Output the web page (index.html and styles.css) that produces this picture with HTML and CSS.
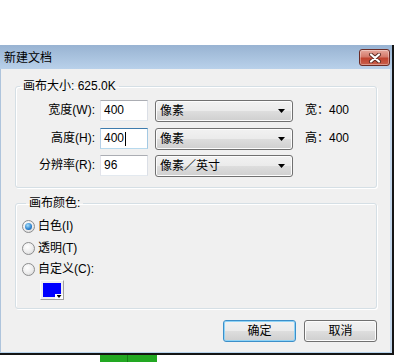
FILE: index.html
```html
<!DOCTYPE html>
<html lang="zh-CN">
<head>
  <meta charset="UTF-8" />
  <title>新建文档</title>
  <link rel="stylesheet" href="styles.css">
</head>
<body>
  <div class="window">
    <div class="frame">
      <div class="titlebar">
        <span class="title">新建文档</span>
        <button class="close" title="关闭">
          <svg width="14" height="10" viewBox="0 0 14 10">
            <path d="M3 1.5 L11 8.5 M11 1.5 L3 8.5" stroke="#5b2a22" stroke-width="4" stroke-linecap="round" fill="none"/>
            <path d="M3 1.5 L11 8.5 M11 1.5 L3 8.5" stroke="#fff" stroke-width="2.2" stroke-linecap="round" fill="none"/>
          </svg>
        </button>
      </div>
      <div class="dialog">
        <fieldset class="group size">
          <legend>画布大小: 625.0K</legend>
          <div class="row">
            <label>宽度(W):</label>
            <div class="field">400</div>
            <div class="combo"><span>像素</span><i class="arrow"></i></div>
            <span class="info">宽：400</span>
          </div>
          <div class="row">
            <label>高度(H):</label>
            <div class="field focused">400<span class="caret"></span></div>
            <div class="combo"><span>像素</span><i class="arrow"></i></div>
            <span class="info">高：400</span>
          </div>
          <div class="row last">
            <label>分辨率(R):</label>
            <div class="field">96</div>
            <div class="combo"><span>像素／英寸</span><i class="arrow"></i></div>
          </div>
        </fieldset>

        <fieldset class="group colour">
          <legend>画布颜色:</legend>
          <div class="option"><span class="radio on"></span><span>白色(I)</span></div>
          <div class="option"><span class="radio"></span><span>透明(T)</span></div>
          <div class="option"><span class="radio"></span><span>自定义(C):</span></div>
          <div class="swatch"><b></b><span class="drop"></span></div>
        </fieldset>

        <div class="buttons">
          <button class="btn default">确定</button>
          <button class="btn">取消</button>
        </div>
      </div>
    </div>
  </div>
  <div class="strip"><span></span><span></span></div>
</body>
</html>
```

FILE: styles.css
```css
* {
  box-sizing: border-box;
}
body {
  margin: 0;
  padding-top: 45px;
  background: #fff;
  font-family: "Liberation Sans", "Noto Sans CJK SC", sans-serif;
  font-size: 12px;
  color: #000;
}
button {
  font: inherit;
  color: inherit;
}

/* 窗口外框 */
.window {
  width: 394px;
  border-right: 2px solid #151515;
  border-bottom: 2px solid #151515;
}
.frame {
  border-left: 1px solid #aec4dc;
  border-right: 2px solid #c3d6ea;
  border-bottom: 1px solid #b7d4ee;
}
.titlebar {
  height: 24px;
  display: flex;
  align-items: center;
  padding-left: 4px;
  background: linear-gradient(#98b3d2, #b9d1ea);
  margin-left: -1px;
  margin-right: -2px;
  padding-right: 2px;
}
.title {
  line-height: 16px;
  margin-top: 1px;
}
.close {
  margin-left: auto;
  align-self: flex-start;
  margin-top: 4px;
  width: 31px;
  height: 17px;
  padding: 0;
  display: flex;
  align-items: center;
  justify-content: center;
  border: 1px solid #6b2b25;
  border-radius: 3px;
  background: linear-gradient(#e7a89c, #d47a6b 45%, #c0432f 55%, #c9604c);
  box-shadow: inset 0 0 0 1px rgba(255,255,255,0.35);
}

/* 对话框主体 */
.dialog {
  height: 283px;
  background: #f0f0f0;
  padding: 0 13px 0 14px;
  display: flex;
  flex-direction: column;
}
.group {
  margin: 0;
  padding: 7px 0 10px 0;
  min-width: 0;
  border: 1px solid #d5dfe5;
  border-radius: 3px;
  box-shadow: 1px 1px 0 #fff, inset 1px 1px 0 #fff;
}
.group legend {
  margin-left: 4px;
  padding: 0 3px;
  line-height: 14px;
}
.size {
  margin-top: 10px;
}
.colour {
  margin-top: 8px;
  padding: 6px 0 8px 6px;
}

.row {
  display: flex;
  align-items: flex-start;
  height: 22px;
  margin-bottom: 6px;
}
.row.last {
  margin-bottom: 0;
}
.row + .row.last {
  margin-top: -1px;
}
.row label {
  width: 79px;
  text-align: right;
  line-height: 21px;
}
.field {
  margin-left: 5px;
  width: 48px;
  height: 21px;
  padding: 0 3px;
  line-height: 19px;
  background: #fff;
  border: 1px solid;
  border-color: #abadb3 #dbdfe6 #e3e9ef #e2e3ea;
  display: flex;
  align-items: center;
}
.field.focused {
  border-color: #3d7bad #a4c9e3 #b7d9ed #b5cfe7;
}
.caret {
  display: inline-block;
  width: 1px;
  height: 14px;
  background: #000;
  margin-left: 1px;
}
.combo {
  margin-left: 7px;
  width: 138px;
  height: 22px;
  display: flex;
  align-items: center;
  padding: 0 7px 0 4px;
  border: 1px solid #707070;
  border-radius: 3px;
  background: linear-gradient(#f2f2f2, #ebebeb 48%, #dddddd 52%, #cfcfcf);
  box-shadow: inset 0 0 0 1px #fcfcfc;
}
.combo span {
  flex: 1;
  line-height: 16px;
}
.arrow {
  width: 7px;
  height: 4px;
  background: #000;
  clip-path: polygon(0 0, 100% 0, 50% 100%);
}
.info {
  margin-left: 12px;
  line-height: 21px;
}

/* 单选项 */
.option {
  display: flex;
  align-items: center;
  height: 20px;
  margin-bottom: 1px;
}
.option:first-of-type {
  margin-bottom: 2px;
}
.option span:last-child {
  margin-left: 3px;
  line-height: 16px;
}
.radio {
  width: 13px;
  height: 13px;
  border-radius: 50%;
  border: 1px solid #8c8d8e;
  background: radial-gradient(circle at 40% 35%, #ffffff, #ececec 55%, #cfcfcf);
  display: flex;
  align-items: center;
  justify-content: center;
}
.radio.on::after {
  content: "";
  width: 7px;
  height: 7px;
  border-radius: 50%;
  background: radial-gradient(circle at 40% 35%, #a7e0fb, #2a7fcc 60%, #0f4f93);
}
.swatch {
  position: relative;
  margin-left: 18px;
  width: 24px;
  height: 20px;
  padding: 2px;
  border: 1px solid;
  border-color: #fdfdfd #a0a0a0 #a0a0a0 #fdfdfd;
  background: #f0f0f0;
}
.swatch b {
  display: block;
  height: 100%;
  background: #0000ff;
}
.swatch .drop {
  position: absolute;
  right: 0;
  bottom: 0;
  width: 8px;
  height: 5px;
  background: #fff;
  display: flex;
  justify-content: center;
  padding-top: 1px;
}
.swatch .drop::after {
  content: "";
  width: 5px;
  height: 3px;
  background: #000;
  clip-path: polygon(0 0, 100% 0, 50% 100%);
}

/* 按钮 */
.buttons {
  display: flex;
  justify-content: flex-end;
  gap: 8px;
  margin-top: 11px;
}
.btn {
  width: 73px;
  height: 22px;
  padding: 0;
  line-height: 18px;
  border: 1px solid #707070;
  border-radius: 3px;
  background: linear-gradient(#f2f2f2, #ebebeb 48%, #dddddd 52%, #cfcfcf);
  box-shadow: inset 0 0 0 1px #fcfcfc;
}
.btn.default {
  border-color: #3c8fc9;
  box-shadow: inset 0 0 0 1px #8fd3f6;
}

/* 底部露出的背景 */
.strip {
  display: flex;
  margin-left: 100px;
  height: 7px;
}
.strip span {
  width: 28px;
  background: #22a822;
  border-right: 1px solid #178017;
}
.strip span + span {
  width: 29px;
  border-right: none;
}
```
